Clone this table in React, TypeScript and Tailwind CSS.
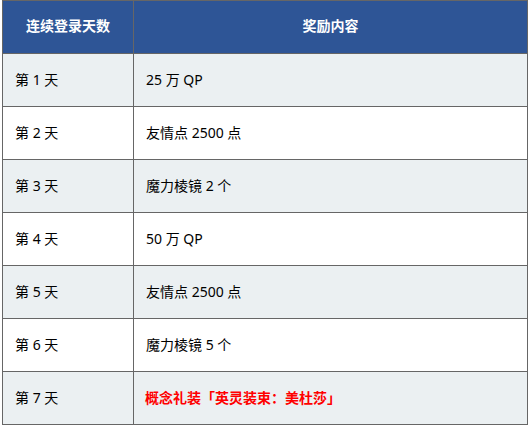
import React from "react";

const rows: { day: string; reward: string; red?: boolean }[] = [
  { day: "第 1 天", reward: "25 万 QP" },
  { day: "第 2 天", reward: "友情点 2500 点" },
  { day: "第 3 天", reward: "魔力棱镜 2 个" },
  { day: "第 4 天", reward: "50 万 QP" },
  { day: "第 5 天", reward: "友情点 2500 点" },
  { day: "第 6 天", reward: "魔力棱镜 5 个" },
  { day: "第 7 天", reward: "概念礼装「英灵装束：美杜莎」", red: true },
];

export default function App() {
  return (
    <div
      className="w-[530px] h-[426px] bg-white overflow-hidden pl-[2px] relative"
      style={{ fontFamily: '"Noto Sans", "Noto Sans CJK SC", sans-serif' }}
    >
      <table className="w-[526px] border-collapse border border-[#666666] text-[14px] leading-[20px]">
        <colgroup>
          <col className="w-[131px]" />
          <col />
        </colgroup>
        <thead>
          <tr className="bg-[#2e5596] h-[53px]">
            <th className="border border-[#666666] text-white font-bold text-center align-middle pb-[2px]">
              连续登录天数
            </th>
            <th className="border border-[#666666] text-white font-bold text-center align-middle pb-[2px]">
              奖励内容
            </th>
          </tr>
        </thead>
        <tbody>
          {rows.map((r, i) => (
            <tr
              key={i}
              className={i % 2 === 0 ? "bg-[#ebf0f2] h-[53px]" : "bg-white h-[53px]"}
            >
              <td className="border border-[#666666] pl-[12px] align-middle text-black">
                {r.day}
              </td>
              <td
                className={
                  r.red
                    ? "border border-[#666666] pl-[11px] align-middle text-[#ff0000] font-bold"
                    : "border border-[#666666] pl-[12px] align-middle text-black"
                }
              >
                {r.reward}
              </td>
            </tr>
          ))}
        </tbody>
      </table>
    </div>
  );
}
